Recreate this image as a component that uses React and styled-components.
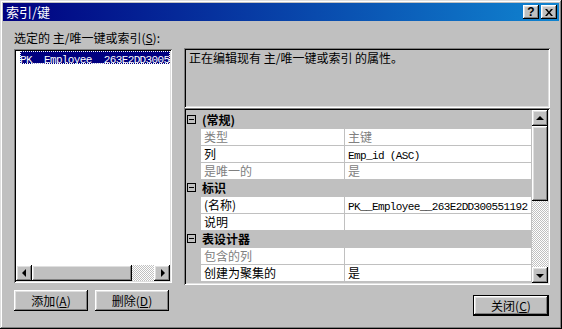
import styled, { createGlobalStyle } from "styled-components";

const GlobalStyle = createGlobalStyle`
  html, body {
    margin: 0;
    padding: 0;
    background: #c0c0c0;
  }
  body {
    font-family: "Noto Sans CJK SC", "Liberation Sans", sans-serif;
    font-size: 12px;
    color: #000;
  }
`;

const raised = `
  box-shadow: inset -1px -1px #000, inset 1px 1px #fff,
    inset -2px -2px #808080, inset 2px 2px #dfdfdf;
`;

const sunken = `
  box-shadow: inset 1px 1px #808080, inset -1px -1px #fff,
    inset 2px 2px #000, inset -2px -2px #dfdfdf;
`;

const Window = styled.div`
  width: 562px;
  height: 329px;
  box-sizing: border-box;
  padding: 3px;
  background: #c0c0c0;
  box-shadow: inset -1px -1px #000, inset 1px 1px #dfdfdf,
    inset -2px -2px #808080, inset 2px 2px #fff;
  display: flex;
  flex-direction: column;
`;

const TitleBar = styled.div`
  height: 18px;
  display: flex;
  align-items: center;
  justify-content: space-between;
  padding: 0 2px 0 3px;
  background: linear-gradient(90deg, #000080 0%, #1084d0 100%);
  color: #fff;
  font-size: 13px;
  line-height: 18px;
`;

const TitleButtons = styled.div`
  display: flex;
  gap: 2px;
`;

const TitleButton = styled.div`
  width: 16px;
  height: 14px;
  background: #c0c0c0;
  ${raised}
  display: flex;
  align-items: center;
  justify-content: center;
  color: #000;
  font-family: "Liberation Sans", sans-serif;
  font-weight: bold;
  font-size: 12px;
  line-height: 14px;
`;

const Body = styled.div`
  display: flex;
  gap: 12px;
  padding: 11px 0 0 11px;
`;

const LeftColumn = styled.div`
  width: 158px;
  display: flex;
  flex-direction: column;
`;

const Label = styled.div`
  height: 12px;
  line-height: 12px;
  margin-bottom: 5px;
  white-space: nowrap;
`;

const ListBox = styled.div`
  height: 234px;
  box-sizing: border-box;
  padding: 2px;
  background: #fff;
  ${sunken}
  display: flex;
  flex-direction: column;
`;

const ListItems = styled.div`
  flex: 1;
  padding: 0 0 0 4px;
  overflow: hidden;
`;

const SelectedItem = styled.div`
  height: 13px;
  line-height: 13px;
  background: #000080;
  color: #fff;
  outline: 1px dotted #fff;
  outline-offset: -1px;
  white-space: nowrap;
`;

const Code = styled.span`
  font-family: "Liberation Mono", monospace;
  font-size: 11px;
  letter-spacing: -0.62px;
`;

const HScroll = styled.div`
  height: 16px;
  display: flex;
`;

const ArrowButton = styled.div`
  width: 16px;
  height: 16px;
  flex: none;
  box-sizing: border-box;
  background: #c0c0c0;
  ${raised}
  display: flex;
  align-items: center;
  justify-content: center;
`;

const Triangle = styled.div`
  width: 0;
  height: 0;
  border: 4px solid transparent;
  ${({ $dir }) =>
    $dir === "left"
      ? "border-right-color: #000; border-left-width: 0; margin-left: -1px;"
      : $dir === "right"
      ? "border-left-color: #000; border-right-width: 0; margin-left: 1px;"
      : $dir === "up"
      ? "border-bottom-color: #000; border-top-width: 0; margin-top: -1px;"
      : "border-top-color: #000; border-bottom-width: 0; margin-top: 1px;"}
`;

const Thumb = styled.div`
  flex: none;
  background: #c0c0c0;
  ${raised}
  ${({ $size, $vertical }) =>
    $vertical ? `height: ${$size}px;` : `width: ${$size}px;`}
`;

const Track = styled.div`
  flex: 1;
  background: repeating-conic-gradient(#c0c0c0 0% 25%, #fff 0% 50%) 0 0 / 2px 2px;
`;

const ButtonRow = styled.div`
  display: flex;
  gap: 7px;
  margin-top: 7px;
`;

const Button = styled.div`
  width: ${({ $default }) => ($default ? "76px" : "74px")};
  height: 21px;
  box-sizing: border-box;
  background: #c0c0c0;
  display: flex;
  align-items: center;
  justify-content: center;
  line-height: 12px;
  ${({ $default }) =>
    $default
      ? `box-shadow: inset 0 0 0 1px #000, inset -2px -2px #000, inset 2px 2px #fff,
          inset -3px -3px #808080, inset 3px 3px #dfdfdf;`
      : raised}
`;

const RightColumn = styled.div`
  width: 366px;
  padding-top: 16px;
  display: flex;
  flex-direction: column;
`;

const Description = styled.div`
  height: 60px;
  box-sizing: border-box;
  padding: 4px 5px;
  line-height: 12px;
  ${sunken}
`;

const PropertyGrid = styled.div`
  height: 177px;
  box-sizing: border-box;
  padding: 4px 2px 2px 2px;
  ${sunken}
  display: flex;
`;

const Rows = styled.div`
  flex: 1;
  display: flex;
  flex-direction: column;
  gap: 1px;
`;

const Row = styled.div`
  height: 16px;
  display: grid;
  grid-template-columns: 14px 143px 1fr;
  column-gap: 1px;
  line-height: 16px;
`;

const ExpandBox = styled.div`
  width: 9px;
  height: 9px;
  margin: 3px 0 0 1px;
  box-sizing: border-box;
  border: 1px solid #000;
  position: relative;
  &::after {
    content: "";
    position: absolute;
    left: 1px;
    right: 1px;
    top: 3px;
    height: 1px;
    background: #000;
  }
`;

const Category = styled.div`
  grid-column: 2 / 4;
  font-weight: bold;
  padding-left: 1px;
`;

const Cell = styled.div`
  background: #fff;
  padding-left: 3px;
  white-space: nowrap;
  overflow: hidden;
  color: ${({ $readonly }) => ($readonly ? "#808080" : "#000")};
`;

const VScroll = styled.div`
  width: 16px;
  margin-left: 1px;
  margin-top: -2px;
  display: flex;
  flex-direction: column;
`;

const Footer = styled.div`
  display: flex;
  justify-content: flex-end;
  margin-top: 10px;
  padding-right: 1px;
`;

const properties = [
  { category: "(常规)" },
  { name: "类型", value: "主键", readonly: true },
  { name: "列", value: <Code>Emp_id (ASC)</Code> },
  { name: "是唯一的", value: "是", readonly: true },
  { category: "标识" },
  { name: "(名称)", value: <Code>PK__Employee__263E2DD300551192</Code> },
  { name: "说明", value: "" },
  { category: "表设计器" },
  { name: "包含的列", value: "", readonly: true },
  { name: "创建为聚集的", value: "是" },
];

export default function App() {
  return (
    <>
      <GlobalStyle />
      <Window>
        <TitleBar>
          <span>索引/键</span>
          <TitleButtons>
            <TitleButton>?</TitleButton>
            <TitleButton>
              <svg width="8" height="7" viewBox="0 0 8 7">
                <path d="M0 0h2l2 2.5L6 0h2L5 3.5 8 7H6L4 4.5 2 7H0l3-3.5z" fill="#000" />
              </svg>
            </TitleButton>
          </TitleButtons>
        </TitleBar>
        <Body>
          <LeftColumn>
            <Label>
              选定的 主/唯一键或索引(<u>S</u>):
            </Label>
            <ListBox>
              <ListItems>
                <SelectedItem>
                  <Code>PK__Employee__263E2DD3005</Code>
                </SelectedItem>
              </ListItems>
              <HScroll>
                <ArrowButton>
                  <Triangle $dir="left" />
                </ArrowButton>
                <Thumb $size={100} />
                <Track />
                <ArrowButton>
                  <Triangle $dir="right" />
                </ArrowButton>
              </HScroll>
            </ListBox>
            <ButtonRow>
              <Button>
                添加(<u>A</u>)
              </Button>
              <Button>
                删除(<u>D</u>)
              </Button>
            </ButtonRow>
          </LeftColumn>
          <RightColumn>
            <Description>正在编辑现有 主/唯一键或索引 的属性。</Description>
            <PropertyGrid>
              <Rows>
                {properties.map((p, i) =>
                  p.category ? (
                    <Row key={i}>
                      <ExpandBox />
                      <Category>{p.category}</Category>
                    </Row>
                  ) : (
                    <Row key={i}>
                      <span />
                      <Cell $readonly={p.readonly}>{p.name}</Cell>
                      <Cell $readonly={p.readonly}>{p.value}</Cell>
                    </Row>
                  )
                )}
              </Rows>
              <VScroll>
                <ArrowButton>
                  <Triangle $dir="up" />
                </ArrowButton>
                <Thumb $vertical $size={75} />
                <Track />
                <ArrowButton>
                  <Triangle $dir="down" />
                </ArrowButton>
              </VScroll>
            </PropertyGrid>
            <Footer>
              <Button $default>
                关闭(<u>C</u>)
              </Button>
            </Footer>
          </RightColumn>
        </Body>
      </Window>
    </>
  );
}
